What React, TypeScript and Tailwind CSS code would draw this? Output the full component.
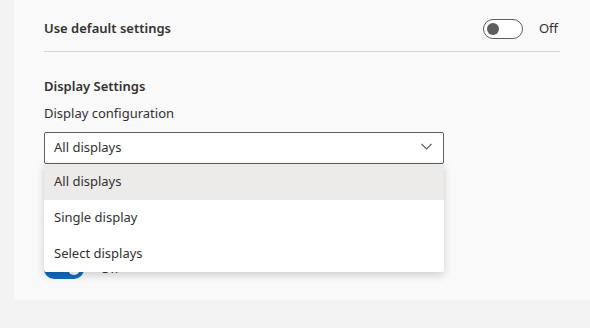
const options = ["All displays", "Single display", "Select displays"];

function Toggle({ on }: { on: boolean }) {
  return on ? (
    <div className="w-10 h-5 rounded-full bg-[#0f6cbd] flex items-center justify-end px-[4px]">
      <div className="w-3 h-3 rounded-full bg-white" />
    </div>
  ) : (
    <div className="w-10 h-5 rounded-full border border-[#605e5c] bg-white flex items-center px-[3px]">
      <div className="w-3 h-3 rounded-full bg-[#605e5c]" />
    </div>
  );
}

export default function App() {
  return (
    <div
      className="w-[590px] h-[328px] bg-[#f3f3f3] overflow-hidden text-[#323130]"
      style={{ fontFamily: '"Noto Sans", "Open Sans", sans-serif' }}
    >
      <div className="ml-[14px] h-[300px] bg-[#f9f9f9] px-[30px]">
        {/* Default settings row */}
        <div className="h-[52px] pt-[6px] flex items-center justify-between border-b border-[#d6d6d6] w-[516px]">
          <span className="text-[13px] font-semibold">Use default settings</span>
          <div className="flex items-center gap-[16px] pr-[2px]">
            <Toggle on={false} />
            <span className="text-[13px] text-[#323130]">Off</span>
          </div>
        </div>

        {/* Display settings */}
        <div className="pt-[24px]">
          <p className="text-[13px] font-semibold leading-5">Display Settings</p>
          <p className="text-[13px] leading-5 mt-[7px]">Display configuration</p>

          <div className="relative mt-[9px] w-[400px]">
            <div className="h-[32px] border border-[#605e5c] rounded-[2px] bg-white flex items-center justify-between pl-[9px] pr-[11px]">
              <span className="text-[13px]">All displays</span>
              <svg width="11" height="7" viewBox="0 0 11 7" fill="none" className="mb-[4px]">
                <path d="M0.5 1 L5.5 6 L10.5 1" stroke="#605e5c" strokeWidth="1.2" />
              </svg>
            </div>

            {/* Open menu */}
            <div className="absolute left-0 top-[32px] w-[400px] bg-white rounded-[2px] shadow-[0_3px_8px_rgba(0,0,0,0.18)] z-10">
              {options.map((o, i) => (
                <div
                  key={o}
                  className={`h-9 flex items-center px-[10px] text-[13px] ${i === 0 ? "bg-[#edebe9]" : ""}`}
                >
                  {o}
                </div>
              ))}
            </div>

            {/* Toggle partly hidden behind menu */}
            <div className="mt-[95px] flex items-center gap-[16px]">
              <Toggle on={true} />
              <span className="text-[13px]">Off</span>
            </div>
          </div>
        </div>
      </div>
    </div>
  );
}
